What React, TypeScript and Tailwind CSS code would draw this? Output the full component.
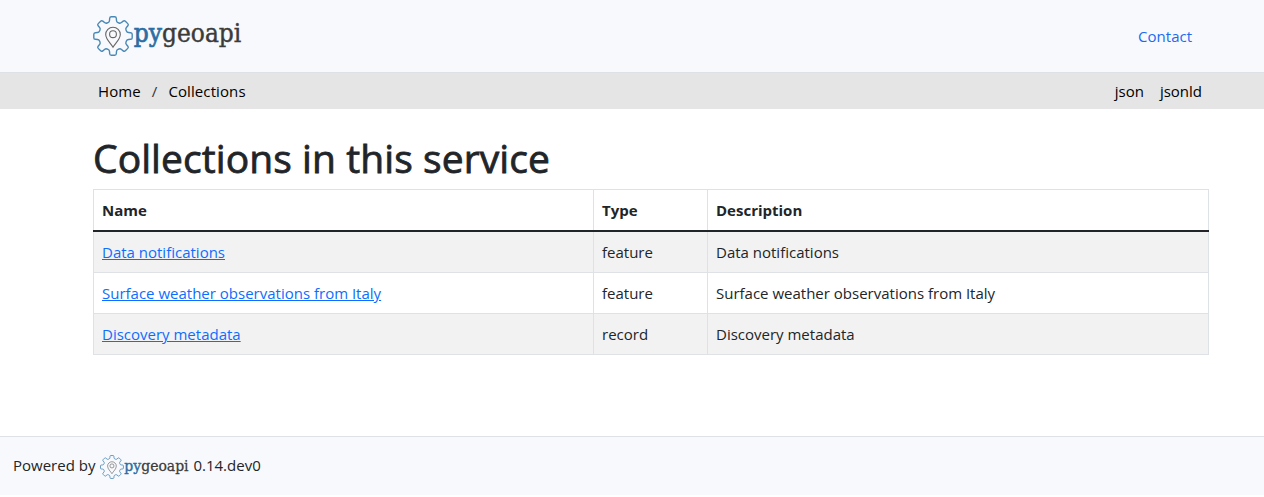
const GEAR = buildGear();

function buildGear(): string {
  const points: [number, number][] = [];
  for (let i = 0; i < 8; i++) {
    const a = (i * Math.PI) / 4;
    const tooth: [number, number][] = [
      [-3.6, 14],
      [-3.2, 19.2],
      [3.2, 19.2],
      [3.6, 14],
    ];
    for (const [x, r] of tooth) {
      points.push([
        20 + x * Math.cos(a) + r * Math.sin(a),
        20 + x * Math.sin(a) - r * Math.cos(a),
      ]);
    }
  }
  const n = points.length;
  let d = "";
  for (let i = 0; i < n; i++) {
    const p = points[i];
    const at = (q: [number, number]) => {
      const len = Math.hypot(q[0] - p[0], q[1] - p[1]);
      const t = Math.min(1.5 / len, 0.5);
      return `${(p[0] + (q[0] - p[0]) * t).toFixed(2)} ${(p[1] + (q[1] - p[1]) * t).toFixed(2)}`;
    };
    d += `${i ? "L" : "M"}${at(points[(i + n - 1) % n])}Q${p[0].toFixed(2)} ${p[1].toFixed(2)} ${at(points[(i + 1) % n])}`;
  }
  return d + "Z";
}

function Logo({ className }: { className: string }) {
  return (
    <svg viewBox="0 0 149 40" className={className} role="img" aria-label="pygeoapi">
      <path d={GEAR} fill="none" stroke="#4a88b6" strokeWidth="1.4" />
      <path
        d="M20 31.2C17.6 27.2 12.7 23.2 12.7 18.5a7.3 7.3 0 0 1 14.6 0C27.3 23.2 22.4 27.2 20 31.2Z"
        fill="none"
        stroke="#666"
        strokeWidth="1.1"
      />
      <circle cx="20" cy="18.2" r="3.4" fill="none" stroke="#666" strokeWidth="1.1" />
      <text
        x="40.8"
        y="26"
        textLength="107.5"
        lengthAdjust="spacingAndGlyphs"
        className="font-['DejaVu_Serif',serif] text-[25.5px]"
        fill="#3b3b3b"
        stroke="#3b3b3b"
        strokeWidth="0.45"
      >
        <tspan fill="#2b6ea3" stroke="#2b6ea3" strokeWidth="0.7">py</tspan>geoapi
      </text>
    </svg>
  );
}

const rows = [
  { name: "Data notifications", type: "feature" },
  { name: "Surface weather observations from Italy", type: "feature" },
  { name: "Discovery metadata", type: "record" },
];

export default function App() {
  return (
    <div className="flex h-[497px] flex-col bg-white font-['Open_Sans','Noto_Sans',sans-serif] text-[15px] leading-6 text-[#212529]">
      <header className="flex h-[73px] shrink-0 items-center justify-between border-b border-[#dee2e6] bg-[#f8f9fc] pr-[72px] pl-[93px]">
        <Logo className="h-10 w-[149px] overflow-visible" />
        <a href="#" className="text-[#1a6bf0]">Contact</a>
      </header>
      <nav className="flex h-9 shrink-0 items-center justify-between bg-[#e5e5e5] pr-[62px] pl-[98px] text-black">
        <div className="flex gap-[11px] tracking-[0.1px]">
          <a href="#">Home</a>
          <span className="text-[#333]">/</span>
          <a href="#">Collections</a>
        </div>
        <div className="flex gap-4">
          <a href="#">json</a>
          <a href="#">jsonld</a>
        </div>
      </nav>
      <main className="flex-1 pt-[26px] pl-[93px]">
        <h1 className="mb-[6px] h-12 text-[39px] leading-[46px] font-medium tracking-[0.08px] whitespace-nowrap [-webkit-text-stroke:0.8px_#212529]">
          Collections in this service
        </h1>
        <table className="w-[1116px] table-fixed border-collapse text-left">
          <colgroup>
            <col className="w-[500px]" />
            <col className="w-[114px]" />
            <col className="w-[501px]" />
          </colgroup>
          <thead>
            <tr className="h-[41px] border-b-2 border-b-[#212529]">
              <th className="border-x border-t border-[#dee2e6] px-2 py-0 font-bold">Name</th>
              <th className="border-x border-t border-[#dee2e6] px-2 py-0 font-bold">Type</th>
              <th className="border-x border-t border-[#dee2e6] px-2 py-0 font-bold">Description</th>
            </tr>
          </thead>
          <tbody>
            {rows.map((row) => (
              <tr key={row.name} className="h-[41px] first:h-[42px] odd:bg-[#f2f2f2]">
                <td className="border-x border-b border-[#dee2e6] px-2 py-0">
                  <a href="#" className="text-[#0d6efd] underline">{row.name}</a>
                </td>
                <td className="border-x border-b border-[#dee2e6] px-2 py-0">{row.type}</td>
                <td className="border-x border-b border-[#dee2e6] px-2 py-0">{row.name}</td>
              </tr>
            ))}
          </tbody>
        </table>
      </main>
      <footer className="mb-[2px] flex h-[59px] shrink-0 items-center border-t border-[#dee2e6] bg-[#f8f9fc] pb-[2px] pl-[13px]">
        <span>Powered by</span>
        <Logo className="mt-[3px] mr-1 ml-[5px] h-6 w-[89px] overflow-visible" />
        <span>0.14.dev0</span>
      </footer>
    </div>
  );
}
